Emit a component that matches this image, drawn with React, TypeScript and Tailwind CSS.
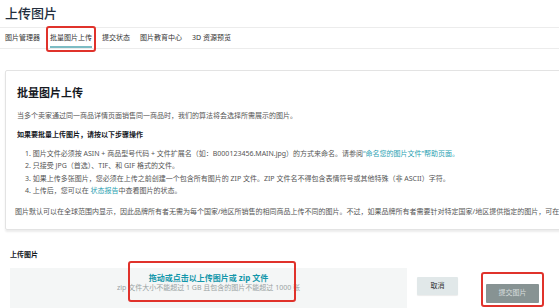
import React from "react";

const font = { fontFamily: '"Noto Sans", "Noto Sans CJK SC", sans-serif' };

export default function App() {
  return (
    <div className="w-[559px] h-[308px] overflow-hidden bg-white text-[#16191f]" style={font}>
      <div className="pl-[5px] pt-[4px]">
        <h1 className="text-[13px] leading-[18px] font-medium text-[#232f3e]">上传图片</h1>
      </div>
      <div className="mt-[5px] h-[22px] border-y border-[#ececec] flex items-stretch px-[5px] gap-[10px] text-[7px] text-[#333]">
        <div className="flex items-center">图片管理器</div>
        <div className="relative flex items-center">
          批量图片上传
          <div className="absolute left-0 right-0 bottom-0 h-[2px] bg-[#7bbcc4]" />
          <div className="absolute -left-[4px] -right-[4px] -top-[2px] -bottom-[4px] border-2 border-[#e0322b] rounded-[3px]" />
        </div>
        <div className="flex items-center">提交状态</div>
        <div className="flex items-center">图片教育中心</div>
        <div className="flex items-center">3D 资源预览</div>
      </div>

      <div className="ml-[5px] mt-[21px] w-[720px] h-[160px] border border-[#e3e3e3] rounded-[2px] shadow-[0_2px_2px_rgba(0,0,0,0.08)] px-[11px] pt-[14px] whitespace-nowrap">
        <h2 className="text-[11px] leading-[15px] font-bold text-[#16191f]">批量图片上传</h2>
        <p className="mt-[11px] text-[7px] leading-[10px] text-[#555]">
          当多个卖家通过同一商品详情页面销售同一商品时，我们的算法将会选择所需展示的图片。
        </p>
        <p className="mt-[9px] text-[7px] leading-[10px] font-bold text-[#16191f]">如果要批量上传图片，请按以下步骤操作</p>
        <div className="mt-[8px] pl-[8px] text-[7px] leading-[12.4px] text-[#555]">
          <div>
            1. 图片文件必须按 ASIN + 商品型号代码 + 文件扩展名（如：B000123456.MAIN.jpg）的方式来命名。请参阅
            <span className="text-[#2a9fb2]">“命名您的图片文件”帮助页面。</span>
          </div>
          <div>2. 只接受 JPG（首选）、TIF、和 GIF 格式的文件。</div>
          <div>
            3. 如果上传多张图片，您必须在上传之前创建一个包含所有图片的 ZIP 文件。ZIP 文件名不得包含表情符号或其他特殊（非 ASCII）字符。
          </div>
          <div>
            4. 上传后，您可以在 <span className="text-[#2a9fb2]">状态报告</span>中查看图片的状态。
          </div>
        </div>
        <p className="mt-[9px] -ml-[2px] text-[7px] leading-[10px] text-[#555]">
          图片默认可以在全球范围内显示，因此品牌所有者无需为每个国家/地区所销售的相同商品上传不同的图片。不过，如果品牌所有者需要针对特定国家/地区提供指定的图片，可在此处上传。
        </p>
      </div>

      <div className="pl-[10px]">
        <div className="mt-[20px] text-[7px] leading-[10px] font-bold text-[#16191f]">上传图片</div>
        <div className="mt-[8px] flex items-start">
          <div className="relative w-[397px] h-[48px] bg-[#f4f6f6] pt-[5px] text-center">
            <div className="text-[8px] leading-[10px] font-bold text-[#1396aa]">拖动或点击以上传图片或 zip 文件</div>
            <div className="text-[7px] leading-[10px] text-[#9aa3a3]">zip 文件大小不能超过 1 GB 且包含的图片不能超过 1000 张</div>
            <div className="absolute left-[118px] top-[-7px] w-[168px] h-[41px] border-2 border-[#e0322b] rounded-[3px]" />
          </div>
          <button className="ml-[10px] mt-[9px] w-[41px] h-[18px] bg-[#e1e8e9] text-[7px] text-[#333] rounded-[1px] shadow-[0_1px_1px_rgba(0,0,0,0.08)]">
            取消
          </button>
          <div className="relative ml-[28px] mt-[9px]">
            <button className="w-[53px] h-[19px] bg-[#879393] text-[7px] text-[#d8dede] rounded-[1px]">提交图片</button>
            <div className="absolute -left-[5px] -right-[5px] -top-[5px] -bottom-[4px] border-2 border-[#e0322b] rounded-[3px]" />
          </div>
        </div>
      </div>
    </div>
  );
}
